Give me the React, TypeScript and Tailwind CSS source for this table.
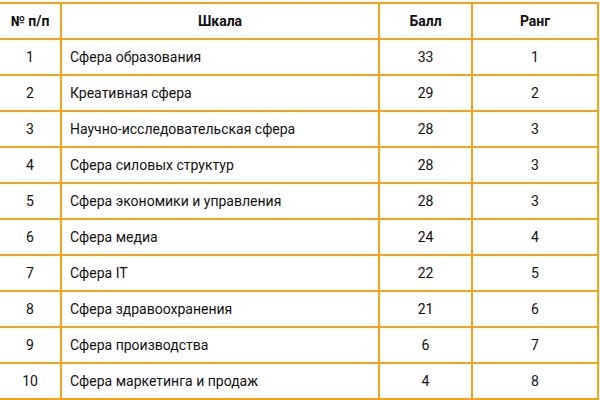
const rows: [number, string, number, number][] = [
  [1, "Сфера образования", 33, 1],
  [2, "Креативная сфера", 29, 2],
  [3, "Научно-исследовательская сфера", 28, 3],
  [4, "Сфера силовых структур", 28, 3],
  [5, "Сфера экономики и управления", 28, 3],
  [6, "Сфера медиа", 24, 4],
  [7, "Сфера IT", 22, 5],
  [8, "Сфера здравоохранения", 21, 6],
  [9, "Сфера производства", 6, 7],
  [10, "Сфера маркетинга и продаж", 4, 8],
];

function Row({ cells, head = false }: { cells: (string | number)[]; head?: boolean }) {
  return (
    <div className={`flex gap-[2px] h-[34px] shrink-0 ${head ? "font-bold" : ""}`}>
      <div className="w-[60px] shrink-0 bg-white flex items-center justify-center">{cells[0]}</div>
      <div
        className={`w-[316px] shrink-0 bg-white flex items-center ${
          head ? "justify-center" : "pl-[8px]"
        }`}
      >
        {cells[1]}
      </div>
      <div className="w-[91px] shrink-0 bg-white flex items-center justify-center">{cells[2]}</div>
      <div className="w-[124px] shrink-0 bg-white flex items-center justify-center">{cells[3]}</div>
    </div>
  );
}

export default function App() {
  return (
    <div className="w-[600px] h-[400px] overflow-hidden bg-white pt-[2px] font-['Roboto',sans-serif] text-[14px] text-[#111]">
      <div className="w-[599px] flex flex-col gap-[2px] bg-[#f5a31a] py-[2px] pr-[2px]">
        <Row head cells={["№ п/п", "Шкала", "Балл", "Ранг"]} />
        {rows.map((r) => (
          <Row key={r[0]} cells={r} />
        ))}
      </div>
    </div>
  );
}
